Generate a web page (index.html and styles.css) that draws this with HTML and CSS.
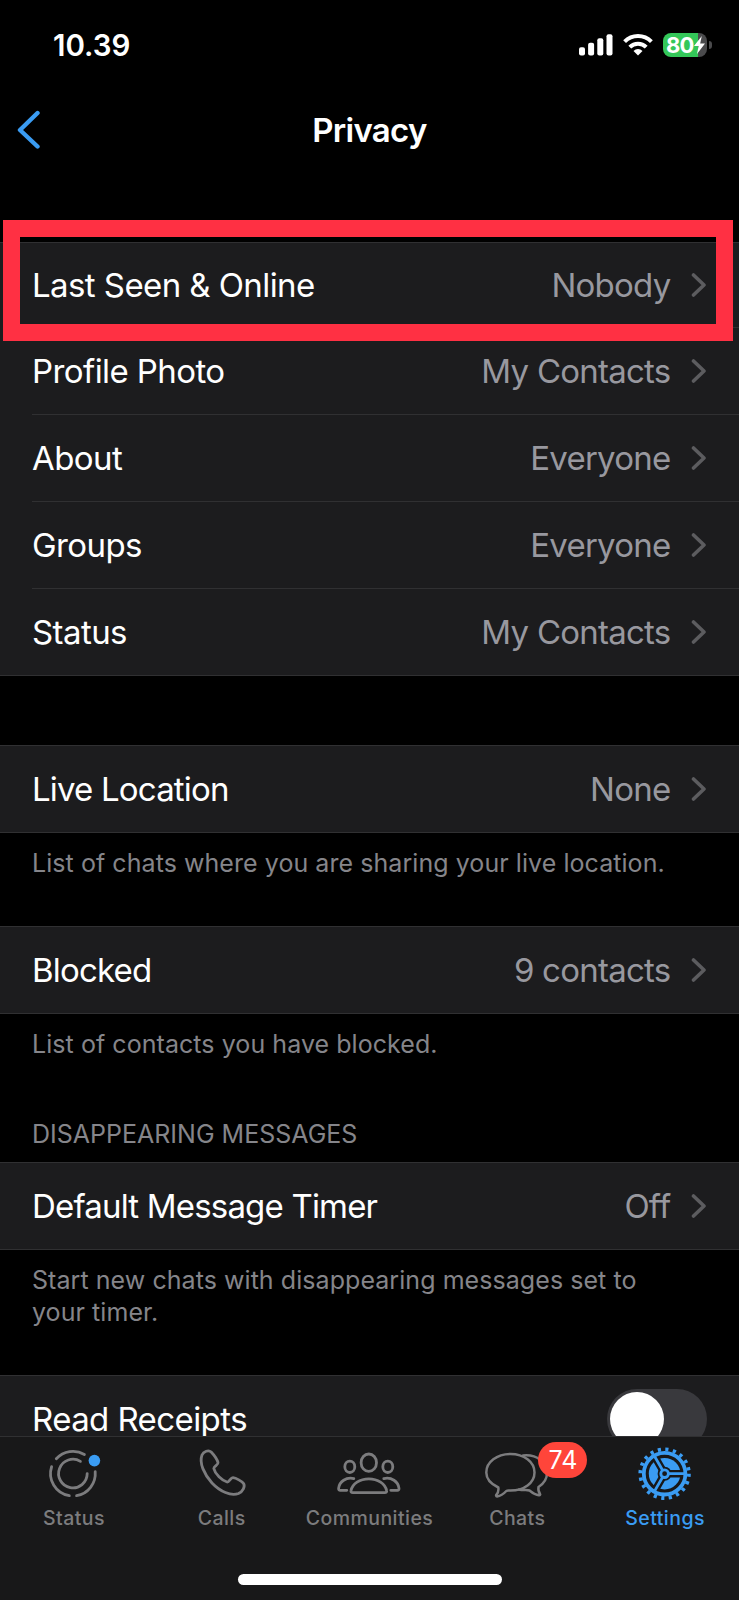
FILE: index.html
```html
<!DOCTYPE html>
<html lang="en">
<head>
  <meta charset="UTF-8">
  <title>Privacy</title>
  <link rel="stylesheet" href="styles.css">
</head>
<body>
  <div class="phone">
    <div class="statusbar">
      <span class="time">10.39</span>
      <div class="indicators">
        <svg class="signal" width="34" height="24" viewBox="0 0 34 24" fill="#fff">
          <rect x="0" y="14.3" width="6" height="8.2" rx="2"/>
          <rect x="9.1" y="9.8" width="6" height="12.7" rx="2"/>
          <rect x="18.3" y="5.3" width="6" height="17.2" rx="2"/>
          <rect x="27.5" y="1.2" width="6" height="21.3" rx="2"/>
        </svg>
        <svg class="wifi" width="30" height="24" viewBox="0 0 30 24" fill="none" stroke="#fff" stroke-width="4">
          <path d="M1.6 8.6a19 19 0 0 1 26.8 0"/>
          <path d="M6.8 14.2a11.6 11.6 0 0 1 16.4 0"/>
          <path d="M15 22.5l-4.5-4.6a6.5 6.5 0 0 1 9 0z" fill="#fff" stroke="none"/>
        </svg>
        <div class="battery">
          <span>80</span>
          <svg width="11" height="18" viewBox="0 0 11 18"><path d="M7.8 0L0 10h4.6L3 18l8-10.4H6.2z" fill="#fff"/></svg>
        </div>
        <div class="battery-cap"></div>
      </div>
    </div>

    <div class="navbar">
      <svg class="back" width="24" height="40" viewBox="0 0 24 40"><path d="M20.5 3L3 20l17.5 16.5" fill="none" stroke="#3a9cf3" stroke-width="4.4" stroke-linecap="round" stroke-linejoin="round"/></svg>
      <h1>Privacy</h1>
    </div>

    <div class="content">
      <div class="group">
        <div class="row highlight">
          <span class="label">Last Seen &amp; Online</span><span class="value">Nobody</span>
          <svg class="chevron" viewBox="0 0 16 26"><path d="M2.5 3l10.5 10-10.5 10"/></svg>
        </div>
        <div class="row">
          <span class="label">Profile Photo</span><span class="value">My Contacts</span>
          <svg class="chevron" viewBox="0 0 16 26"><path d="M2.5 3l10.5 10-10.5 10"/></svg>
        </div>
        <div class="row">
          <span class="label">About</span><span class="value">Everyone</span>
          <svg class="chevron" viewBox="0 0 16 26"><path d="M2.5 3l10.5 10-10.5 10"/></svg>
        </div>
        <div class="row">
          <span class="label">Groups</span><span class="value">Everyone</span>
          <svg class="chevron" viewBox="0 0 16 26"><path d="M2.5 3l10.5 10-10.5 10"/></svg>
        </div>
        <div class="row">
          <span class="label">Status</span><span class="value">My Contacts</span>
          <svg class="chevron" viewBox="0 0 16 26"><path d="M2.5 3l10.5 10-10.5 10"/></svg>
        </div>
      </div>

      <div class="group live">
        <div class="row">
          <span class="label tight">Live Location</span><span class="value">None</span>
          <svg class="chevron" viewBox="0 0 16 26"><path d="M2.5 3l10.5 10-10.5 10"/></svg>
        </div>
      </div>
      <p class="note">List of chats where you are sharing your live location.</p>

      <div class="group blocked">
        <div class="row">
          <span class="label tight">Blocked</span><span class="value">9 contacts</span>
          <svg class="chevron" viewBox="0 0 16 26"><path d="M2.5 3l10.5 10-10.5 10"/></svg>
        </div>
      </div>
      <p class="note">List of contacts you have blocked.</p>

      <h2>DISAPPEARING MESSAGES</h2>
      <div class="group">
        <div class="row">
          <span class="label tight">Default Message Timer</span><span class="value">Off</span>
          <svg class="chevron" viewBox="0 0 16 26"><path d="M2.5 3l10.5 10-10.5 10"/></svg>
        </div>
      </div>
      <p class="note">Start new chats with disappearing messages set to<br>your timer.</p>

      <div class="group receipts">
        <div class="row">
          <span class="label">Read Receipts</span>
          <span class="toggle"><span class="knob"></span></span>
        </div>
      </div>
    </div>

    <div class="tabbar">
      <div class="tab">
        <svg class="icon" viewBox="0 0 80 54">
          <path d="M22.3 12.8A22.4 22.4 0 0 1 50.4 8.5M61.2 25.7A22.4 22.4 0 0 1 42.6 49.7M35.3 49.7A22.4 22.4 0 0 1 17.6 20.7"/>
          <path d="M53.2 27.6A14.3 14.3 0 1 1 46.4 15.4"/>
          <circle cx="60.4" cy="14.6" r="5.8" fill="#3a9cf3" stroke="none"/>
        </svg>
        <span>Status</span>
      </div>
      <div class="tab">
        <svg class="icon" viewBox="0 0 80 54">
          <path d="M20 9C21.5 5.5 26.5 3.500 29.2 6C32 9 35 13 36 16.5C36.5 19 32 20 31.8 22.5C33 28 40 34.5 45 36C47.3 36.5 48.5 31.5 51 31.7C54 32 60 35.3 61.6 37.5C63.3 40.5 61 45.5 56.5 47.5C49 50.5 38 45.5 30 37C22 28 17 17 20 9Z"/>
        </svg>
        <span>Calls</span>
      </div>
      <div class="tab">
        <svg class="icon" viewBox="0 0 80 54">
          <ellipse cx="39.8" cy="16.7" rx="7.7" ry="8.7"/>
          <ellipse cx="20.8" cy="20.8" rx="5" ry="5.7"/>
          <ellipse cx="58.8" cy="20.8" rx="5" ry="5.7"/>
          <path d="M23.9 46.7H55.700C57.3 46.700 57.9 45.8 57.6 44.6C56.3 37.8 48.8 32.8 39.8 32.8S23.3 37.8 22 44.6C21.7 45.8 22.3 46.7 23.9 46.7Z"/>
          <path d="M24.8 32.6C17.3 30.6 10.3 35.8 9.6 42.3C9.5 43.8 10.1 44.3 11.3 44.3H17.8M54.8 32.6C62.3 30.6 69.300 35.8 70 42.3C70.1 43.8 69.5 44.3 68.3 44.3H61.8"/>
        </svg>
        <span>Communities</span>
      </div>
      <div class="tab">
        <svg class="icon chats" viewBox="0 0 80 54">
          <path d="M33.5 8C47 8 57.5 16 57.5 26.5S47 44.600 33.5 44.600C31.5 44.6 30.5 44.300 29.3 45C26.5 48 23 50 20 50.400C19 50.400 18.8 49.4 19.5 48.6C21.3 46.5 21.8 44.5 21.3 41.5C14 38 9.3 33 9.3 26.5C9.3 16 20 8 33.5 8Z"/>
          <path d="M46 9.5C60 8 70 16.5 70 27C70 32.5 67 37.5 61.500 41C61 44 61.5 46 63 47.8C63.5 48.6 63 49.3 62 49.2C58.5 49 55.5 47 52.5 44.5C50 43.5 46 44.7 42 43.5"/>
        </svg>
        <span>Chats</span>
        <b class="count">74</b>
      </div>
      <div class="tab active">
        <svg class="icon" viewBox="0 0 80 54">
          <circle cx="39.6" cy="27.7" r="24.3" stroke-width="3.800" stroke-dasharray="3.2 4.434"/>
          <circle cx="39.6" cy="27.7" r="20.8" stroke-width="3.8"/>
          <circle cx="39.6" cy="27.7" r="15.8" fill="#3a9cf3" stroke="none"/>
          <path d="M39.6 27.7H57M39.6 27.7L30.9 12.6M39.6 27.7L30.9 42.8" stroke="#181819" stroke-width="7.5"/>
          <circle cx="39.6" cy="27.7" r="7" fill="#181819" stroke="none"/>
          <path d="M39.6 27.7H60M39.6 27.7L29.4 10M39.6 27.7L29.4 45.4" stroke-width="2.8"/>
          <circle cx="39.6" cy="27.7" r="3.8" fill="#181819"/>
        </svg>
        <span>Settings</span>
      </div>
      <div class="home"></div>
    </div>
  </div>
</body>
</html>
```

FILE: styles.css
```css
* {
  box-sizing: border-box;
}
body {
  margin: 0;
  background: #000;
  font-family: Inter, "Liberation Sans", sans-serif;
  color: #fff;
}
.phone {
  width: 739px;
  height: 1600px;
  display: flex;
  flex-direction: column;
  overflow: hidden;
}

/* status bar */
.statusbar {
  height: 90px;
  flex: none;
  display: flex;
  justify-content: space-between;
  padding: 0 27px 0 53px;
}
.time {
  font-size: 29.5px;
  font-weight: 600;
  line-height: 36px;
  margin-top: 27px;
}
.indicators {
  display: flex;
  align-items: flex-start;
  padding-top: 33px;
}
.wifi {
  margin: 0 10px 0 10px;
}
.battery {
  width: 44px;
  height: 24px;
  border-radius: 8px;
  background: linear-gradient(to right, #34c759 80%, #4a4a4c 80%);
  display: flex;
  align-items: center;
  padding-left: 3px;
}
.battery span {
  font-size: 22px;
  font-weight: 700;
  letter-spacing: -0.8px;
}
.battery-cap {
  width: 3px;
  height: 8px;
  margin: 8px 0 0 2px;
  border-radius: 0 3px 3px 0;
  background: #4a4a4c;
}

/* title */
.navbar {
  height: 110px;
  flex: none;
  display: grid;
  grid-template-columns: 60px 1fr 60px;
  align-items: start;
}
.back {
  margin: 20px 0 0 17px;
}
h1 {
  margin: 20px 0 0;
  font-size: 33px;
  font-weight: 600;
  line-height: 40px;
  text-align: center;
  letter-spacing: -0.7px;
}

/* settings list */
.content {
  height: 1236px;
  padding-top: 42px;
  flex: none;
  overflow: hidden;
}
.group {
  background: #1c1c1e;
  border-top: 1px solid #303032;
  border-bottom: 1px solid #303032;
}
.row {
  height: 87px;
  display: flex;
  align-items: center;
  padding: 0 32px;
  font-size: 33px;
  line-height: 40px;
  position: relative;
}
.row + .row::before {
  content: "";
  position: absolute;
  left: 32px;
  right: 0;
  top: 0;
  height: 1px;
  background: #303032;
}
.group .row:first-child {
  height: 86px;
}
.group .highlight:first-child {
  height: 84px;
}
.label {
  flex: 1;
  letter-spacing: -0.58px;
}
.tight {
  letter-spacing: -0.82px;
}
.value {
  color: #98989f;
  letter-spacing: -0.75px;
}
.chevron {
  width: 16px;
  height: 26px;
  margin-left: 20.5px;
  fill: none;
  stroke: #5c5c5f;
  stroke-width: 3.6;
  stroke-linecap: round;
  stroke-linejoin: round;
}
.highlight::after {
  content: "";
  position: absolute;
  left: 3px;
  right: 6px;
  top: -23px;
  height: 87px;
  border: 17.5px solid #ff3043;
  z-index: 2;
}
.live {
  margin-top: 69px;
}
.note {
  margin: 0;
  padding: 14px 32px 1px;
  font-size: 25px;
  line-height: 32px;
  letter-spacing: 0.06px;
  color: #85858a;
}
.blocked {
  margin-top: 46px;
}
h2 {
  margin: 0;
  padding: 57px 32px 12px;
  font-size: 25px;
  font-weight: 400;
  line-height: 32px;
  color: #85858a;
}
.receipts {
  margin-top: 46px;
}
.toggle {
  width: 100px;
  height: 60px;
  border-radius: 30px;
  background: #39393d;
  padding: 3px;
}
.knob {
  display: block;
  width: 54px;
  height: 54px;
  border-radius: 50%;
  background: #fff;
}

/* bottom tabs */
.tabbar {
  flex: 1;
  background: #181819;
  border-top: 1px solid #303032;
  display: grid;
  grid-template-columns: repeat(5, 1fr);
  grid-template-rows: 137px 1fr;
}
.tab {
  position: relative;
  display: flex;
  flex-direction: column;
  align-items: center;
  padding-top: 9px;
  font-size: 19.5px;
  font-weight: 500;
  letter-spacing: 0.45px;
  line-height: 26px;
  color: #7c7c7e;
}
.icon {
  width: 80px;
  height: 54px;
  margin-bottom: 5px;
  fill: none;
  stroke: currentColor;
  stroke-width: 2.8;
  stroke-linecap: round;
  stroke-linejoin: round;
}
.active {
  color: #3a9cf3;
}
.active .icon {
  stroke-linecap: butt;
}
.chats {
  stroke-width: 2.5;
}
.count {
  position: absolute;
  left: 95px;
  top: 5px;
  width: 49px;
  height: 36px;
  border-radius: 18px;
  background: #ff453a;
  color: #fff;
  font-size: 25px;
  font-weight: 400;
  line-height: 36px;
  text-align: center;
  letter-spacing: 0;
}
.home {
  grid-column: 1 / -1;
  justify-self: center;
  width: 264px;
  height: 11px;
  border-radius: 6px;
  background: #fff;
}
```
